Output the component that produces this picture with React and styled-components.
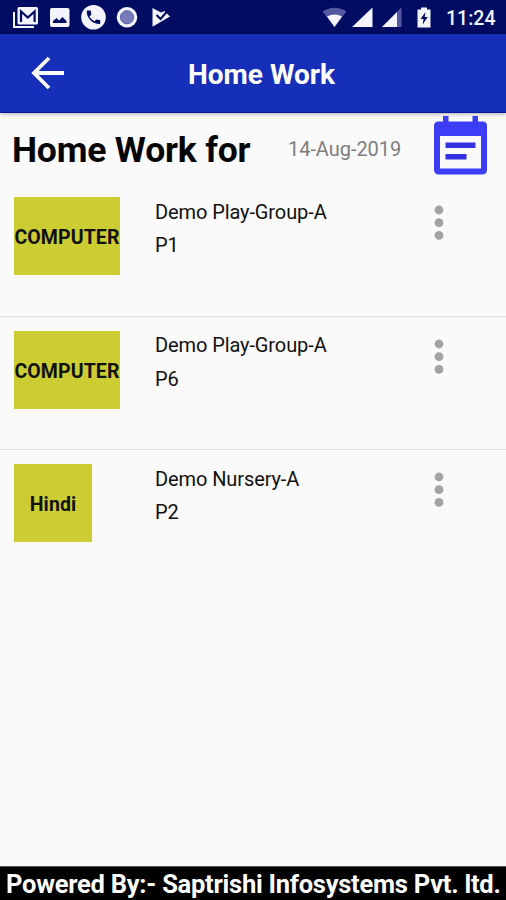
import React from "react";
import styled, { createGlobalStyle } from "styled-components";

const GlobalStyle = createGlobalStyle`
  * { box-sizing: border-box; }
  body { margin: 0; background: #fafafa; font-family: Roboto, sans-serif; color: #111; }
  h1, h2, p { margin: 0; }
`;

const Screen = styled.div`
  display: flex;
  flex-direction: column;
  width: 506px;
  height: 900px;
  overflow: hidden;
  background: #fafafa;
`;

const StatusBar = styled.div`
  display: flex;
  justify-content: space-between;
  flex: none;
  height: 34px;
  background: #000b62;
`;

const StatusGroup = styled.div`
  display: flex;
`;

const StatusIcons = styled.svg`
  display: block;
  flex: none;
  width: ${(p) => p.$width}px;
  height: 34px;
`;

const Clock = styled.span`
  width: 66px;
  padding-left: 6px;
  font-size: 19.5px;
  font-weight: 500;
  line-height: 37px;
  letter-spacing: 0;
  white-space: nowrap;
  color: #f2f3fa;
`;

const Toolbar = styled.header`
  position: relative;
  display: grid;
  grid-template-columns: 188px 1fr;
  align-items: center;
  flex: none;
  height: 79px;
  background: #162fb9;
  border-bottom: 1px solid #0717a0;
  box-shadow: 0 1px 4px rgba(0, 0, 0, 0.3);
`;

const BackButton = styled.button`
  width: 36px;
  height: 36px;
  margin-left: 30px;
  padding: 0;
  border: 0;
  background: none;
  svg { display: block; }
`;

const Title = styled.h1`
  padding-top: 3px;
  font-size: 28px;
  font-weight: 700;
  line-height: 34px;
  letter-spacing: 0;
  color: #fff;
`;

const DateBar = styled.section`
  display: grid;
  grid-template-columns: 276px 146px 1fr;
  flex: none;
  height: 70px;
  padding-left: 12px;
`;

const Heading = styled.h2`
  font-size: 35.5px;
  font-weight: 700;
  line-height: 75px;
  letter-spacing: -0.2px;
  white-space: nowrap;
  color: #050505;
`;

const DateText = styled.span`
  font-size: 20px;
  line-height: 72px;
  letter-spacing: -0.05px;
  color: #7d7d7d;
`;

const CalendarButton = styled.button`
  width: 54px;
  height: 60px;
  margin-top: 3px;
  padding: 0;
  border: 0;
  background: none;
  svg { display: block; }
`;

const List = styled.main`
  flex: 1;
`;

const Row = styled.article`
  display: grid;
  grid-template-columns: 141px 276px 1fr;
  align-items: start;
  height: 133.6px;
  padding: 14px 0 0 14px;
  border-bottom: ${(p) => (p.$last ? "none" : "1.5px solid #dedede")};
`;

const Subject = styled.div`
  justify-self: start;
  display: flex;
  align-items: center;
  justify-content: center;
  width: ${(p) => (p.$wide ? 106 : 78)}px;
  height: 78px;
  padding-top: 3px;
  background: #cccc33;
  font-size: 19.5px;
  font-weight: 700;
  letter-spacing: 0.1px;
  white-space: nowrap;
`;

const Details = styled.div`
  font-size: 20px;
  line-height: 33.5px;
  letter-spacing: -0.1px;
  margin-top: -1.4px;
`;

const MenuButton = styled.button`
  width: 16px;
  height: 40px;
  margin-top: 6px;
  padding: 0;
  border: 0;
  background: none;
  svg { display: block; }
`;

const Footer = styled.footer`
  flex: none;
  height: 34px;
  padding-left: 6px;
  background: #000;
  border-top: 1px solid #555;
  font-size: 25.5px;
  font-weight: 700;
  line-height: 35px;
  letter-spacing: -0.25px;
  white-space: nowrap;
  color: #fff;
`;

const items = [
  { subject: "COMPUTER", group: "Demo Play-Group-A", period: "P1", wide: true },
  { subject: "COMPUTER", group: "Demo Play-Group-A", period: "P6", wide: true },
  { subject: "Hindi", group: "Demo Nursery-A", period: "P2", wide: false },
];

const Notifications = () => (
  <StatusIcons $width={180} viewBox="0 0 180 34" fill="#f4f5fc">
    <path d="M14 12v15h20" fill="none" stroke="#f4f5fc" strokeWidth="2" />
    <rect x="17.5" y="7" width="20.5" height="17.5" rx="1.5" />
    <path d="M21 22V11.5l6.8 6 6.8-6V22" fill="none" stroke="#000b62" strokeWidth="2.2" />
    <rect x="50" y="8" width="19.5" height="19" rx="2" />
    <path d="M53 23v-2l3.500-3 2.500 2.500 3.500-3.500 4 4v2z" fill="#000b62" />
    <circle cx="93.5" cy="17.3" r="12.3" />
    <path transform="translate(84.5 8.3) scale(.75)" fill="#000b62" d="M6.620 10.790a15.100 15.100 0 0 0 6.590 6.590l2.200-2.200c.28-.28.67-.36 1.020-.25 1.120.37 2.330.57 3.570.57a1 1 0 0 1 1 1V20a1 1 0 0 1-1 1A17 17 0 0 1 3 4a1 1 0 0 1 1-1h3.500a1 1 0 0 1 1 1c0 1.250.2 2.450.57 3.570.11.35.03.74-.25 1.020z" />
    <circle cx="127" cy="17.3" r="10.3" />
    <circle cx="127" cy="17.3" r="6.6" fill="#777bbb" stroke="#5a5fa8" strokeWidth="1" />
    <path d="M152.500 8l8.500 4.500 3.500-1.500 5.500 5.500-17.500 10.300z" />
    <path d="M156.500 15l4 4 6.500-7.500" fill="none" stroke="#000b62" strokeWidth="2" />
  </StatusIcons>
);

const SystemIcons = () => (
  <StatusIcons $width={120} viewBox="320 0 120 34" fill="#f4f5fc">
    <path d="M322.5 11.5Q334.5 4 346.5 11.5L334.5 27z" fill="#5259a0" />
    <path d="M327 16.500Q334.500 12.500 342 16.500L334.500 27z" />
    <path d="M372.5 7.500V27H352z" />
    <path d="M401.5 7.500V27H382z" fill="#5259a0" />
    <path d="M397 12V27H382z" />
    <path d="M421 7.500h6v2h3.500V27.500h-13V9.500h3.500z" />
    <path d="M425.500 12l-5 7h3l-.8 5.500 5-7.500h-3z" fill="#000b62" />
  </StatusIcons>
);

const BackArrow = () => (
  <svg width="36" height="36" viewBox="0 0 36 36" fill="none" stroke="#fff" strokeWidth="3.8">
    <path d="M34 18H4M19 3L4 18l15 15" />
  </svg>
);

const CalendarIcon = () => (
  <svg width="54" height="60" viewBox="0 0 54 60">
    <path fill="#3d3df5" fillRule="evenodd" d="M9 0h5.500v5.500h24V0H44v5.500h4.500Q53 5.500 53 10v43.500q0 5-5 5H5q-5 0-5-5V10q0-4.500 4.500-4.500H9zM6 20v32.500h41V20z" />
    <path fill="#3333df" d="M11.500 26.500h30v5.500h-30zM11.500 38h21v5.500h-21z" />
  </svg>
);

const MoreIcon = () => (
  <svg width="16" height="40" viewBox="0 0 16 40" fill="#a3a3a3">
    <circle cx="8" cy="7" r="4.4" />
    <circle cx="8" cy="19.7" r="4.4" />
    <circle cx="8" cy="32.4" r="4.4" />
  </svg>
);

export default function App() {
  return (
    <Screen>
      <GlobalStyle />
      <StatusBar>
        <Notifications />
        <StatusGroup>
          <SystemIcons />
          <Clock>11:24</Clock>
        </StatusGroup>
      </StatusBar>
      <Toolbar>
        <BackButton aria-label="Back"><BackArrow /></BackButton>
        <Title>Home Work</Title>
      </Toolbar>
      <DateBar>
        <Heading>Home Work for</Heading>
        <DateText>14-Aug-2019</DateText>
        <CalendarButton aria-label="Choose date"><CalendarIcon /></CalendarButton>
      </DateBar>
      <List>
        {items.map((item, i) => (
          <Row key={item.period} $last={i === items.length - 1}>
            <Subject $wide={item.wide}>{item.subject}</Subject>
            <Details>
              <p>{item.group}</p>
              <p>{item.period}</p>
            </Details>
            <MenuButton aria-label="More options"><MoreIcon /></MenuButton>
          </Row>
        ))}
      </List>
      <Footer>Powered By:- Saptrishi Infosystems Pvt. ltd.</Footer>
    </Screen>
  );
}
